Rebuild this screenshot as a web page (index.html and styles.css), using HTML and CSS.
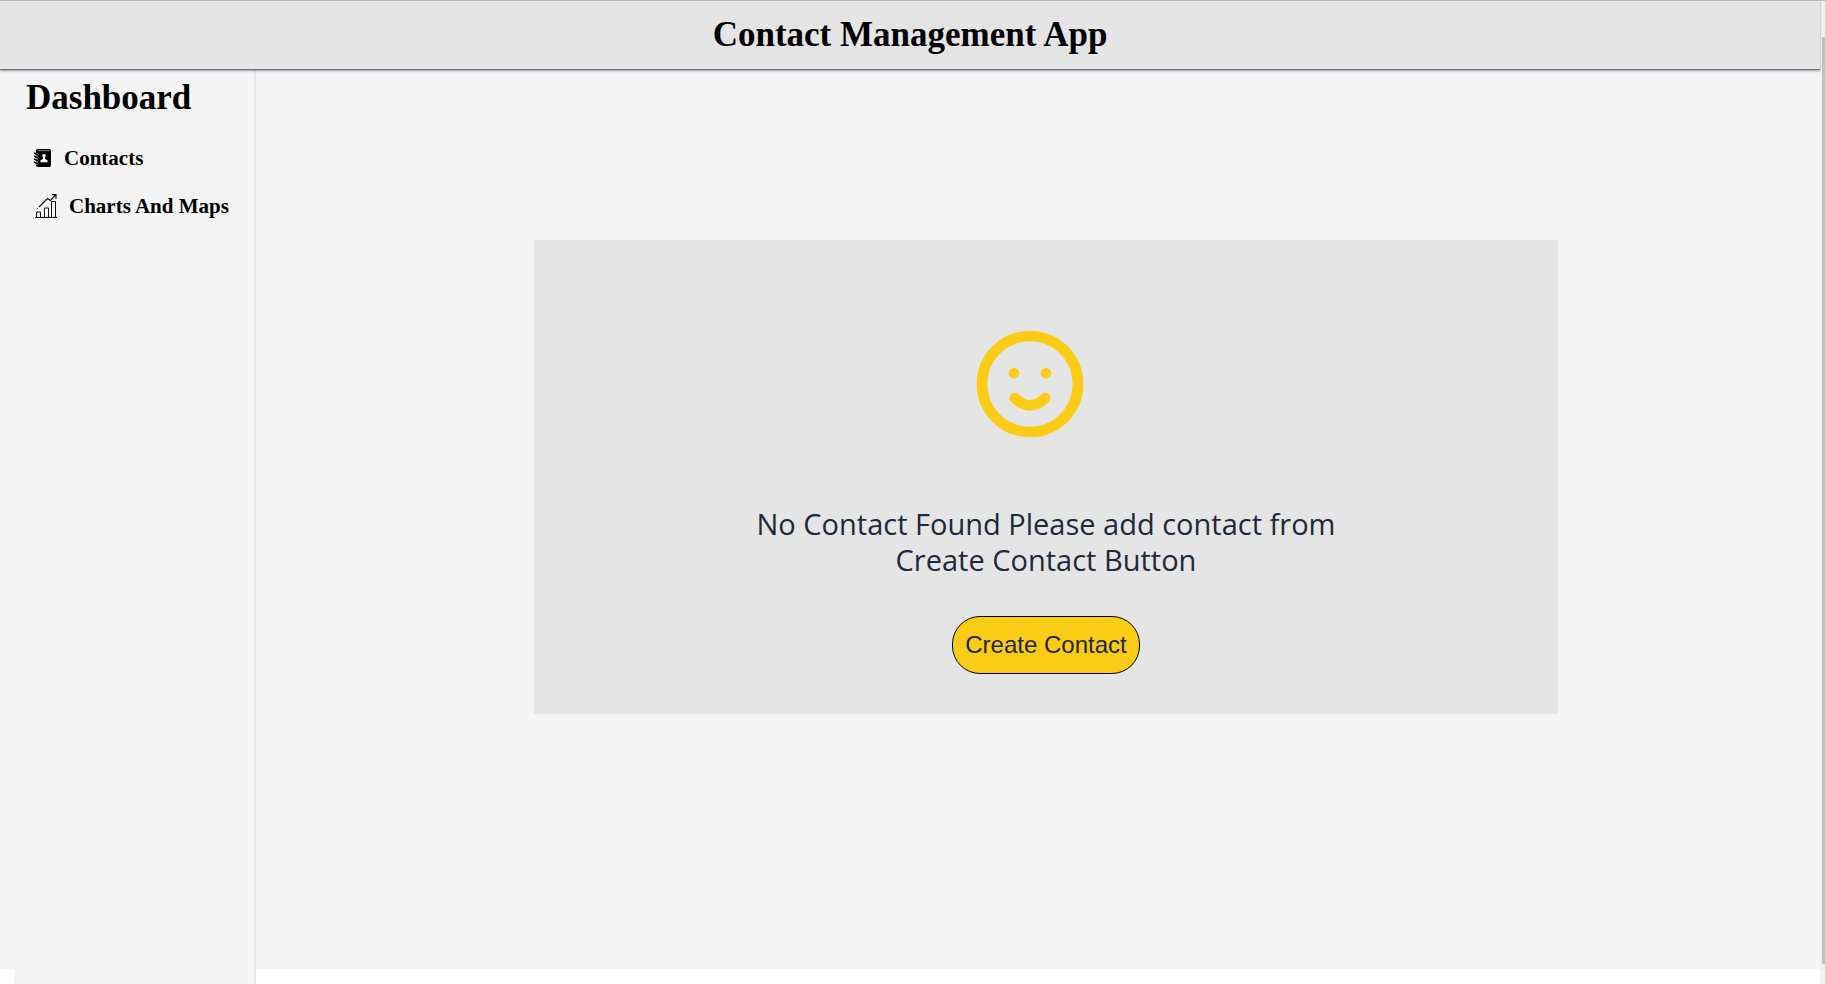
FILE: index.html
```
<!DOCTYPE html>
<html lang="en">
<head>
<meta charset="utf-8">
<title>Contact Management App</title>
<link rel="stylesheet" href="styles.css">
</head>
<body>
<div class="window">
  <div class="app">
    <header class="topbar"><h1 class="heading">Contact Management App</h1></header>
    <div class="layout">
      <aside class="sidebar">
        <h2 class="heading">Dashboard</h2>
        <nav class="nav">
          <a class="nav-link" href="#contacts">
            <svg class="icon-contacts" viewBox="0 0 18 18" aria-hidden="true">
              <path d="M4 0h11a2 2 0 0 1 2 2v14a2 2 0 0 1-2 2H4a2 2 0 0 1-2-2V2a2 2 0 0 1 2-2z"/>
              <path d="M0 4l4 2M0 7l4 2M0 10l4 2M0 13l4 2" stroke="#f5f5f5" stroke-width="2.4"/>
              <path d="M0 4l4 2M0 7l4 2M0 10l4 2M0 13l4 2" stroke="#000" stroke-width="1.5"/>
              <path d="M4 1.7h11" stroke="#aaa" stroke-width=".8"/>
              <path fill="#fff" d="M10 5a1.8 1.8 0 0 1 1.1 3.2v1.9l2.4 1.2v2h-7v-2l2.4-1.2V8.200A1.8 1.8 0 0 1 10 5z"/>
            </svg>
            Contacts
          </a>
          <a class="nav-link" href="#charts">
            <svg class="icon-charts" viewBox="0 0 22 24" aria-hidden="true" fill="none" stroke="#111">
              <path d="M0 23.500h22" stroke-width="1.200"/>
              <path d="M1.500 23v-5h4v5M9.500 23v-9h4v9M16.500 23V7.500h4V23"/>
              <path d="M4 13l8.500-8.500 3 2L20.500 1M17 .7h4v4" stroke-width="1.200"/>
              <path d="M2 15l.8-.8"/>
            </svg>
            Charts And Maps
          </a>
        </nav>
      </aside>
      <main class="content">
        <section class="card">
          <svg class="smile" viewBox="0 0 24 24" aria-hidden="true">
            <circle cx="12" cy="12" r="9" fill="none" stroke="currentColor" stroke-width="2"/>
            <circle cx="9" cy="10" r="1" fill="currentColor"/>
            <circle cx="15" cy="10" r="1" fill="currentColor"/>
            <path d="M9.150 14.650Q12 17.350 14.850 14.650" fill="none" stroke="currentColor" stroke-width="2" stroke-linecap="round"/>
          </svg>
          <p class="message">No Contact Found Please add contact from Create Contact Button</p>
          <button class="create" type="button">Create Contact</button>
        </section>
      </main>
    </div>
  </div>
  <div class="track"><div class="thumb"></div></div>
</div>
</body>
</html>
```
FILE: styles.css
```
* { box-sizing: border-box; }
body { margin: 0; background: #fff; }
.window { display: flex; height: 100vh; overflow: hidden; border-top: 1px solid #c4b5b2; }
.app { flex: 1; min-width: 0; }
.topbar {
  position: relative;
  z-index: 1;
  display: flex;
  justify-content: center;
  height: 69px;
  padding: 16px 0;
  background: #e5e5e5;
  border-bottom: 1px solid #6b7280;
  box-shadow: 0 1px 2px rgba(71, 85, 105, .6);
}
.heading {
  margin: 0;
  font-family: Georgia, "Liberation Serif", serif;
  font-size: 35px;
  font-weight: 700;
  line-height: 36px;
  color: #000;
  white-space: nowrap;
}
.layout { display: flex; height: calc(100vh - 85px); background: #f5f5f5; }
.sidebar {
  width: 242px;
  height: 100vh;
  margin-left: 14px;
  padding: 10px 12px;
  background: #f5f5f5;
  border-right: 2px solid #e5e7eb;
}
.nav { display: flex; flex-direction: column; gap: 20px; margin-top: 28px; padding-left: 8px; }
.nav-link {
  display: flex;
  align-items: center;
  gap: 12px;
  height: 28px;
  font-family: Georgia, "Liberation Serif", serif;
  font-size: 21px;
  font-weight: 700;
  line-height: 28px;
  color: #000;
  text-decoration: none;
  white-space: nowrap;
}
.icon-contacts { width: 18px; height: 18px; }
.icon-charts { width: 22px; height: 24px; margin-left: 1px; }
.content { flex: 1; padding: 170px 0 0 16px; }
.card {
  display: flex;
  flex-direction: column;
  align-items: center;
  max-width: 1024px;
  margin: 0 auto;
  padding: 80px 0 40px;
  background: #e5e5e5;
}
.smile { width: 128px; height: 128px; margin-right: 32px; color: #facc15; }
.message {
  max-width: 600px;
  margin: 58px 0 38px;
  font-family: "Segoe UI", "Open Sans", sans-serif;
  font-size: 29px;
  line-height: 36px;
  text-align: center;
  color: #1e293b;
}
.create {
  height: 58px;
  padding: 0 12px;
  font-family: Arial, "Liberation Sans", sans-serif;
  font-size: 24px;
  color: #1e293b;
  background: #facc15;
  border: 1px solid #000;
  border-radius: 28px;
}
.track { width: 5px; padding: 36px 0 20px 2px; background: #f1f1f1; }
.thumb { height: 100%; background: #c1c1c1; }
```
